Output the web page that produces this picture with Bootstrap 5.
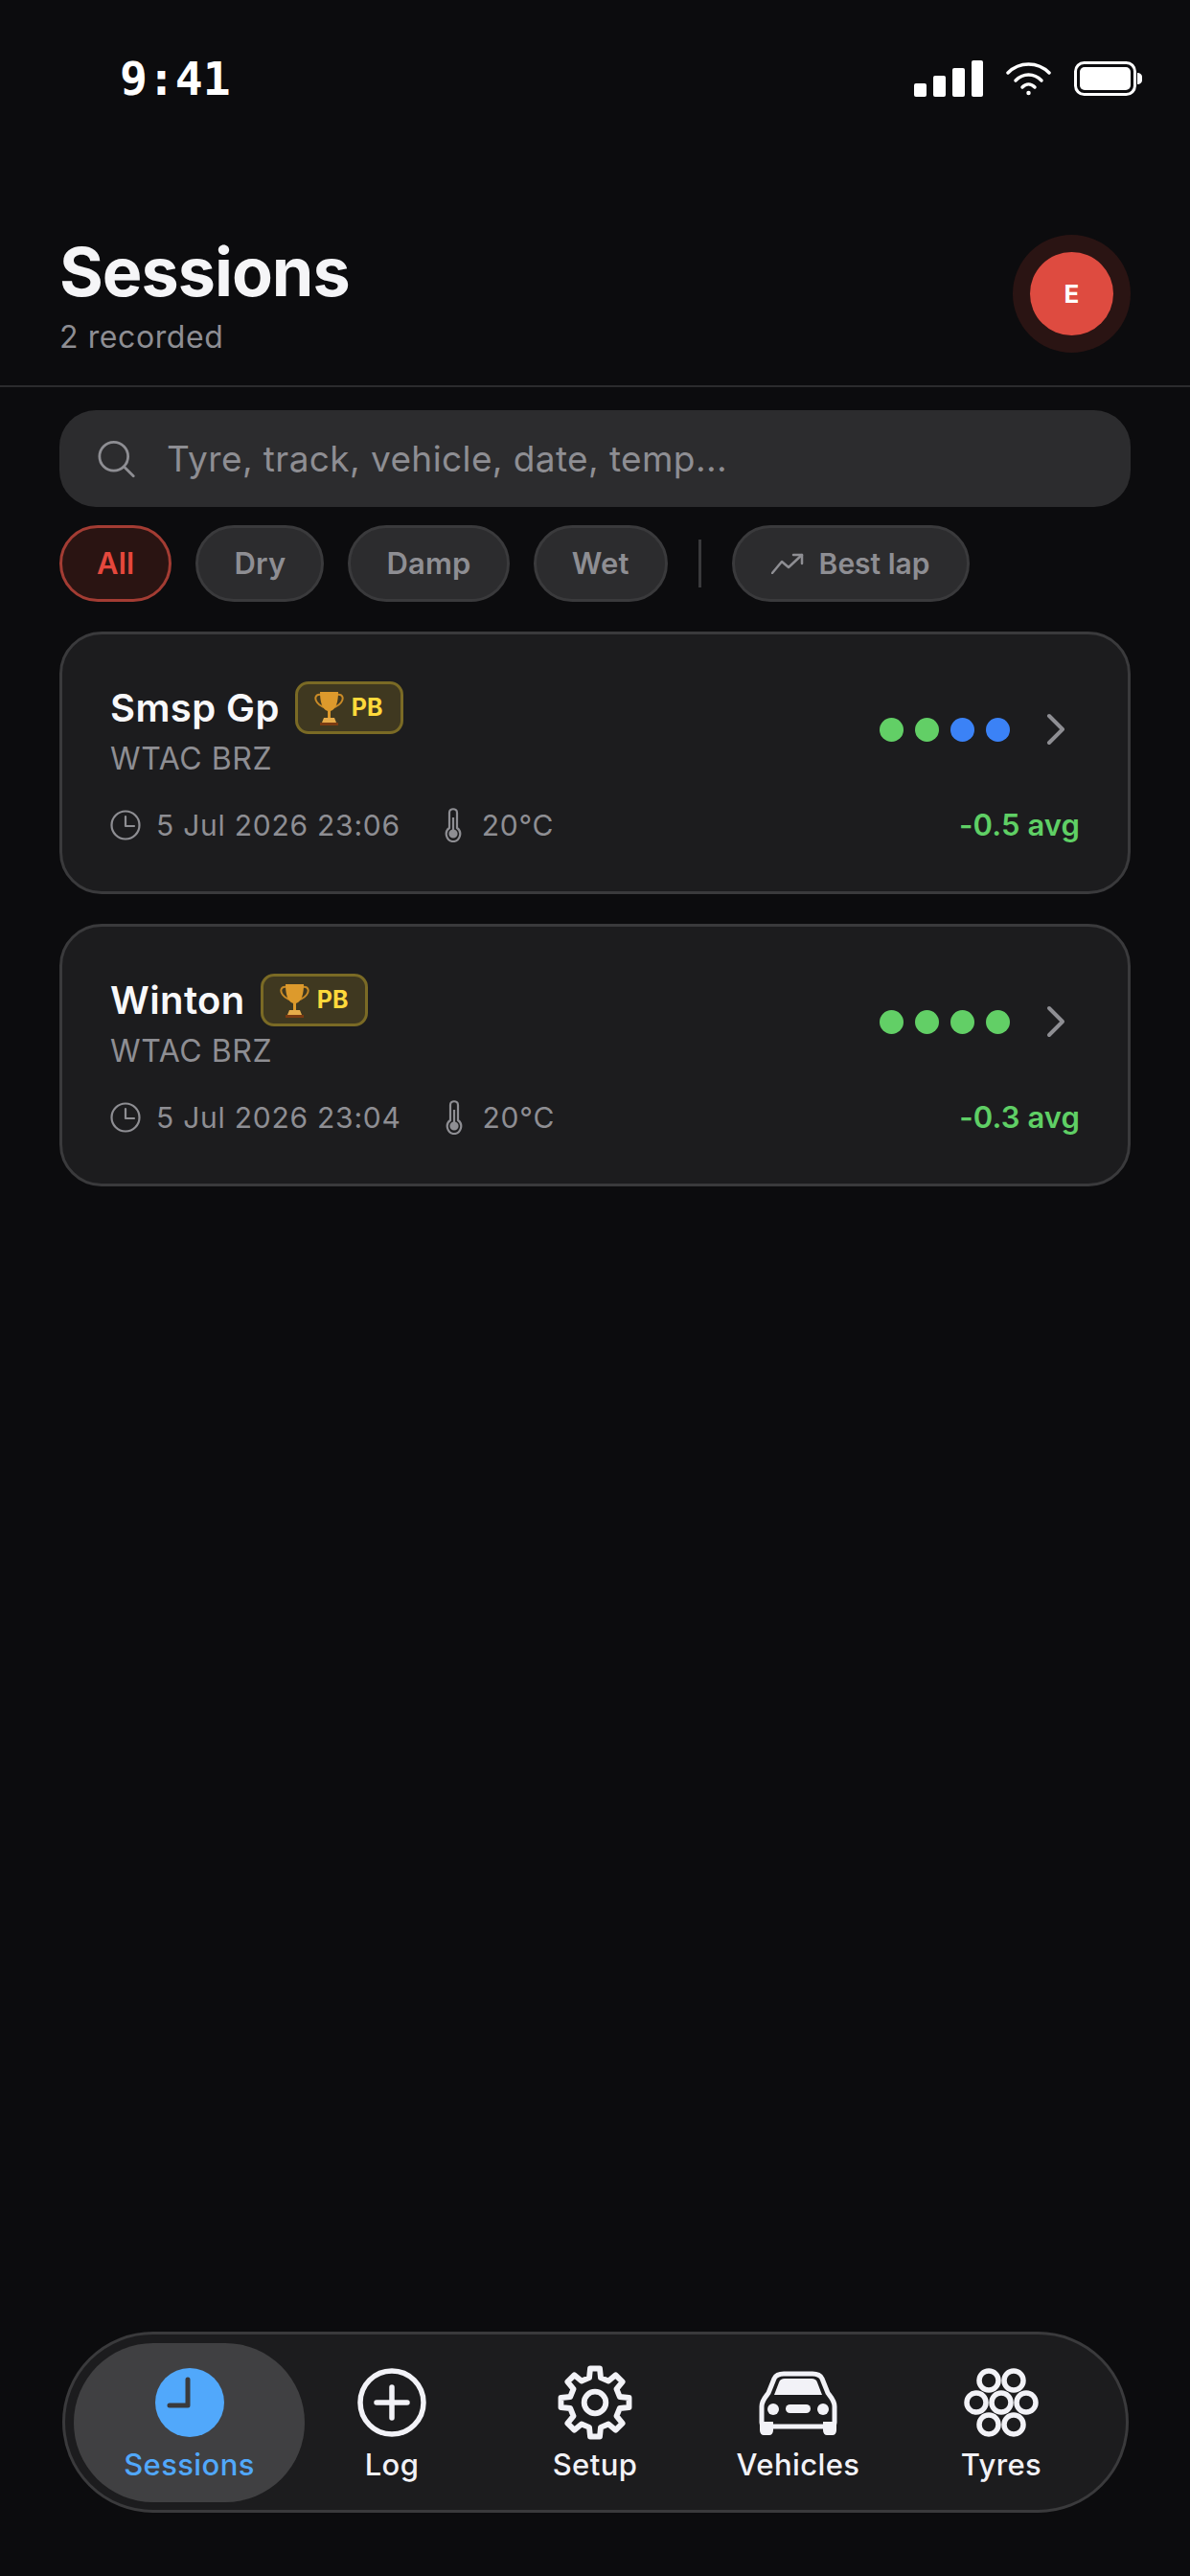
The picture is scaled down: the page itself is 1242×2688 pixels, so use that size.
<!DOCTYPE html>
<html lang="en">

<head>
    <meta charset="UTF-8">
    <meta name="viewport" content="width=device-width, initial-scale=1.0">
    <link href="https://cdn.jsdelivr.net/npm/bootstrap@5.3.0/dist/css/bootstrap.min.css" rel="stylesheet">
    <script src="https://cdn.jsdelivr.net/npm/bootstrap@5.3.0/dist/js/bootstrap.bundle.min.js"></script>
    <title>Sessions</title>
    <style>
        body {
            background: #0c0c0e;
            color: #f2f2f7;
            font-family: "Inter", "Liberation Sans", sans-serif;
        }

        /* status bar */
        .status-row {
            height: 44px;
            margin-top: 60px;
            padding: 0 50px 0 125px;
        }

        .status-time {
            font: 700 48px/44px "DejaVu Sans Mono", monospace;
            color: #fff;
        }

        /* header */
        .head-row {
            height: 300px;
            padding: 138px 62px 0 62px;
            border-bottom: 2px solid #2c2c2e;
        }

        .head-title {
            font-size: 70px;
            font-weight: 700;
            line-height: 84px;
            letter-spacing: -1px;
            margin: 0;
            color: #f5f5f7;
        }

        .head-sub {
            margin-top: 7px;
            font-size: 32px;
            line-height: 38px;
            letter-spacing: .6px;
            color: #8e8e93;
        }

        .avatar-dot {
            width: 87px;
            height: 87px;
            margin: 21px 18px 0 0;
            background: #de4b40;
            box-shadow: 0 0 0 18px #2a1413;
            font-size: 26px;
            font-weight: 700;
            color: #fff;
        }

        /* search + chips */
        .page-pad {
            padding: 24px 62px 0;
        }

        .search-wrap {
            height: 101px;
            padding: 0 40px;
            gap: 33px;
            background: #2c2c2e;
            border-radius: 38px;
        }

        .search-input,
        .search-input:focus {
            padding: 0;
            background: transparent;
            border: 0;
            box-shadow: none;
            font-size: 37px;
            letter-spacing: .4px;
            color: #f2f2f7;
        }

        .search-input::placeholder {
            color: #8e8e93;
            opacity: 1;
        }

        .chip-row {
            margin-top: 19px;
            margin-bottom: 31px;
            gap: 25px;
        }

        .chip-btn,
        .chip-btn:hover {
            height: 80px;
            padding: 0 37px;
            background: #2c2c2e;
            border: 3px solid #3a3a3c;
            color: #8e8e93;
            font-size: 31px;
            font-weight: 600;
            letter-spacing: .2px;
        }

        .chip-btn.chip-on {
            padding: 0 36px;
            background: #2a1412;
            border-color: #a33c33;
            color: #e5483d;
        }

        .chip-btn.chip-lap {
            padding: 0 38px;
            font-size: 30px;
            letter-spacing: 0;
        }

        .chip-rule {
            width: 3px;
            height: 50px;
            margin: 0 7px;
            background: #3a3a3c;
        }

        /* session cards */
        .session-card {
            height: 274px;
            margin-bottom: 31px;
            padding: 49px 50px 0;
            background: #1c1c1e;
            border: 3px solid #3a3a3c;
            border-radius: 44px;
            color: #f2f2f7;
        }

        .session-name {
            font-size: 40px;
            font-weight: 600;
            line-height: 55px;
            letter-spacing: .4px;
            color: #f8f8fa;
        }

        .pb-tag {
            height: 55px;
            padding: 0 18px 0 17px;
            gap: 8px;
            background: #3f3820;
            border: 3px solid #7a6a25;
            border-radius: 14px;
            font-size: 25px;
            font-weight: 700;
            color: #ffd93b;
        }

        .session-sub {
            font-size: 32px;
            line-height: 38px;
            letter-spacing: .6px;
            margin-top: 7px;
            color: #8e8e93;
        }

        .tyre-dot {
            width: 25px;
            height: 25px;
        }

        .dot-green {
            background: #62cf66;
        }

        .dot-blue {
            background: #3b82f6;
        }

        .dot-row {
            gap: 12px;
        }

        .chev-icon {
            margin: 0 15px 0 38px;
        }

        .meta-row {
            margin-top: 31px;
            font-size: 30px;
            line-height: 38px;
            letter-spacing: .75px;
            color: #8e8e93;
        }

        .thermo-icon {
            margin: 0 21px 0 46px;
        }

        .avg-text {
            font-size: 31px;
            font-weight: 600;
            letter-spacing: .1px;
            color: #5fcf65;
        }

        /* tab bar */
        .tab-shell {
            height: 189px;
            margin: 0 64px 66px 65px;
            padding: 9px 9px 8px;
            background: #1c1c1e;
            border: 3px solid #3a3a3c;
        }

        .tab-item {
            width: 212px;
            padding-top: 26px;
            font-size: 31px;
            font-weight: 500;
            line-height: 38px;
            letter-spacing: .4px;
            color: #f2f2f7;
        }

        .tab-item svg {
            margin-bottom: 10px;
        }

        .tab-item svg.gear-icon {
            margin: -3px 0 7px;
        }

        .tab-item.tab-on {
            width: 241px;
            margin-right: -15px;
            background: #404042;
            color: #51a8fb;
        }
    </style>
</head>

<body class="d-flex flex-column min-vh-100">
    <!-- status bar -->
    <div class="status-row d-flex justify-content-between align-items-center">
        <span class="status-time">9:41</span>
        <div class="d-flex align-items-center">
            <svg width="72" height="38" viewBox="0 0 72 38" fill="#fff">
                <rect x="0" y="24" width="13" height="14" rx="2"/>
                <rect x="20" y="16" width="13" height="22" rx="2"/>
                <rect x="40" y="8" width="13" height="30" rx="2"/>
                <rect x="60" y="0" width="12" height="38" rx="2"/>
            </svg>
            <svg class="ms-4" width="47" height="36" viewBox="0 0 47 36" fill="none" stroke="#fff" stroke-width="3.5" stroke-linecap="round">
                <path d="M2 12C14 0 33 0 45 12"/>
                <path d="M10 20C18 12 29 12 37 20"/>
                <path d="M17 27C21 23 26 23 30 27"/>
                <circle cx="23.5" cy="33" r="1.5" fill="#fff" stroke-width="1.5"/>
            </svg>
            <svg class="ms-4" width="71" height="36" viewBox="0 0 71 36" fill="none">
                <rect x="1.5" y="1.5" width="62" height="33" rx="9" stroke="#fff" stroke-width="3"/>
                <rect x="6" y="6" width="53" height="24" rx="5" fill="#fff"/>
                <path d="M66 12c3 0 5 2 5 4v4c0 2-2 4-5 4z" fill="#fff"/>
            </svg>
        </div>
    </div>

    <!-- header -->
    <div class="head-row d-flex justify-content-between align-items-start">
        <div>
            <h1 class="head-title">Sessions</h1>
            <div class="head-sub">2 recorded</div>
        </div>
        <div class="avatar-dot rounded-circle d-flex justify-content-center align-items-center">E</div>
    </div>

    <div class="page-pad">
        <div class="search-wrap d-flex align-items-center">
            <svg width="42" height="42" viewBox="0 0 42 42" fill="none" stroke="#8e8e93" stroke-width="3" stroke-linecap="round">
                <circle cx="18" cy="18" r="16"/>
                <path d="M29.5 29.5L40 40"/>
            </svg>
            <input class="form-control search-input" type="text" placeholder="Tyre, track, vehicle, date, temp...">
        </div>

        <div class="chip-row d-flex align-items-center">
            <button class="btn rounded-pill chip-btn chip-on" type="button">All</button>
            <button class="btn rounded-pill chip-btn" type="button">Dry</button>
            <button class="btn rounded-pill chip-btn" type="button">Damp</button>
            <button class="btn rounded-pill chip-btn" type="button">Wet</button>
            <div class="chip-rule"></div>
            <button class="btn rounded-pill chip-btn chip-lap d-flex align-items-center gap-3" type="button">
                <svg width="34" height="22" viewBox="0 0 34 22" fill="none" stroke="#8e8e93" stroke-width="2.5" stroke-linecap="round" stroke-linejoin="round">
                    <path d="M1 21L11 9L18 15L32 2"/>
                    <path d="M23 2H32V11"/>
                </svg>
                Best lap
            </button>
        </div>

        <div class="card session-card">
            <div class="d-flex justify-content-between align-items-center">
                <div>
                    <div class="d-flex align-items-center gap-3">
                        <span class="session-name">Smsp Gp</span>
                        <span class="pb-tag d-inline-flex align-items-center">
                            <svg width="31" height="38" viewBox="0 0 31 38">
                                <path d="M7 5C1 4 0 9 3 13C5 16 8 17 10 18M24 5C30 4 31 9 28 13C26 16 23 17 21 18" fill="none" stroke="#c98a26" stroke-width="2"/>
                                <path d="M6 2H25C25 12 23 20 17 22V29H14V22C8 20 6 12 6 2Z" fill="#dd9a2c"/>
                                <path d="M10 29H21L23 34H8Z" fill="#e6ac4a"/>
                                <rect x="6" y="34" width="19" height="3" fill="#7a3b12"/>
                            </svg>
                            PB
                        </span>
                    </div>
                    <div class="session-sub">WTAC BRZ</div>
                </div>
                <div class="d-flex align-items-center">
                    <div class="dot-row d-flex">
                        <span class="tyre-dot rounded-circle dot-green"></span>
                        <span class="tyre-dot rounded-circle dot-green"></span>
                        <span class="tyre-dot rounded-circle dot-blue"></span>
                        <span class="tyre-dot rounded-circle dot-blue"></span>
                    </div>
                    <svg class="chev-icon" width="20" height="34" viewBox="0 0 20 34" fill="none" stroke="#8e8e93" stroke-width="4" stroke-linecap="round" stroke-linejoin="round">
                        <path d="M3 3L17 17L3 31"/>
                    </svg>
                </div>
            </div>
            <div class="meta-row d-flex align-items-center">
                <svg width="32" height="32" viewBox="0 0 32 32" fill="none" stroke="#8e8e93" stroke-width="2.2" stroke-linecap="round" stroke-linejoin="round">
                    <circle cx="16" cy="16" r="14.5"/>
                    <path d="M16 7V17H25"/>
                </svg>
                <span class="ms-3">5 Jul 2026 23:06</span>
                <svg class="thermo-icon" width="18" height="36" viewBox="0 0 18 36" fill="none" stroke="#8e8e93" stroke-width="2.2">
                    <path d="M5 21V5C5 0 13 0 13 5V21C19 25 16 35 9 35C2 35 -1 25 5 21Z"/>
                    <circle cx="9" cy="27" r="3.5" fill="#8e8e93"/>
                    <path d="M9 10V24"/>
                </svg>
                <span>20°C</span>
                <span class="avg-text ms-auto">-0.5 avg</span>
            </div>
        </div>

        <div class="card session-card">
            <div class="d-flex justify-content-between align-items-center">
                <div>
                    <div class="d-flex align-items-center gap-3">
                        <span class="session-name">Winton</span>
                        <span class="pb-tag d-inline-flex align-items-center">
                            <svg width="31" height="38" viewBox="0 0 31 38">
                                <path d="M7 5C1 4 0 9 3 13C5 16 8 17 10 18M24 5C30 4 31 9 28 13C26 16 23 17 21 18" fill="none" stroke="#c98a26" stroke-width="2"/>
                                <path d="M6 2H25C25 12 23 20 17 22V29H14V22C8 20 6 12 6 2Z" fill="#dd9a2c"/>
                                <path d="M10 29H21L23 34H8Z" fill="#e6ac4a"/>
                                <rect x="6" y="34" width="19" height="3" fill="#7a3b12"/>
                            </svg>
                            PB
                        </span>
                    </div>
                    <div class="session-sub">WTAC BRZ</div>
                </div>
                <div class="d-flex align-items-center">
                    <div class="dot-row d-flex">
                        <span class="tyre-dot rounded-circle dot-green"></span>
                        <span class="tyre-dot rounded-circle dot-green"></span>
                        <span class="tyre-dot rounded-circle dot-green"></span>
                        <span class="tyre-dot rounded-circle dot-green"></span>
                    </div>
                    <svg class="chev-icon" width="20" height="34" viewBox="0 0 20 34" fill="none" stroke="#8e8e93" stroke-width="4" stroke-linecap="round" stroke-linejoin="round">
                        <path d="M3 3L17 17L3 31"/>
                    </svg>
                </div>
            </div>
            <div class="meta-row d-flex align-items-center">
                <svg width="32" height="32" viewBox="0 0 32 32" fill="none" stroke="#8e8e93" stroke-width="2.2" stroke-linecap="round" stroke-linejoin="round">
                    <circle cx="16" cy="16" r="14.5"/>
                    <path d="M16 7V17H25"/>
                </svg>
                <span class="ms-3">5 Jul 2026 23:04</span>
                <svg class="thermo-icon" width="18" height="36" viewBox="0 0 18 36" fill="none" stroke="#8e8e93" stroke-width="2.2">
                    <path d="M5 21V5C5 0 13 0 13 5V21C19 25 16 35 9 35C2 35 -1 25 5 21Z"/>
                    <circle cx="9" cy="27" r="3.5" fill="#8e8e93"/>
                    <path d="M9 10V24"/>
                </svg>
                <span>20°C</span>
                <span class="avg-text ms-auto">-0.3 avg</span>
            </div>
        </div>
    </div>

    <!-- tab bar -->
    <div class="tab-shell d-flex rounded-pill mt-auto">
        <div class="tab-item tab-on rounded-pill d-flex flex-column align-items-center">
            <svg width="72" height="72" viewBox="0 0 72 72">
                <circle cx="36" cy="36" r="36" fill="#51a8fb"/>
                <path d="M34 12V39H15" fill="none" stroke="#3a3a3c" stroke-width="5" stroke-linecap="round" stroke-linejoin="round"/>
            </svg>
            Sessions
        </div>
        <div class="tab-item d-flex flex-column align-items-center">
            <svg width="72" height="72" viewBox="0 0 72 72" fill="none" stroke="#f2f2f7" stroke-width="5.5" stroke-linecap="round">
                <circle cx="36" cy="36" r="33"/>
                <path d="M36 20V52M20 36H52"/>
            </svg>
            Log
        </div>
        <div class="tab-item d-flex flex-column align-items-center">
            <svg class="gear-icon" width="78" height="78" viewBox="-50 -50 100 100" fill="none" stroke="#f2f2f7" stroke-width="7.5" stroke-linejoin="round">
                <polygon points="-7.65,33.13 -6.4,45.55 6.4,45.55 7.65,33.13 18.02,28.84 27.68,36.73 36.73,27.68 28.84,18.02 33.13,7.65 45.55,6.4 45.55,-6.4 33.13,-7.65 28.84,-18.02 36.73,-27.68 27.68,-36.73 18.02,-28.84 7.65,-33.13 6.4,-45.55 -6.4,-45.55 -7.65,-33.13 -18.02,-28.84 -27.68,-36.73 -36.73,-27.68 -28.84,-18.02 -33.13,-7.65 -45.55,-6.4 -45.55,6.4 -33.13,7.65 -28.84,18.02 -36.73,27.68 -27.68,36.73 -18.02,28.84"/>
                <circle cx="0" cy="0" r="14.5"/>
            </svg>
            Setup
        </div>
        <div class="tab-item d-flex flex-column align-items-center">
            <svg width="84" height="72" viewBox="0 0 84 72" fill="#f2f2f7">
                <path d="M4 40C4 34 8 30 11 26L17 11C19 7 22 6 27 6H57C62 6 65 7 67 11L73 26C76 30 80 34 80 40V57C80 60 78 61 76 61H8C6 61 4 60 4 57Z" fill="none" stroke="#f2f2f7" stroke-width="5"/>
                <path d="M17 28L22 15C23 12 25 11 28 11H56C59 11 61 12 62 15L67 28Z"/>
                <circle cx="16" cy="43" r="6"/>
                <circle cx="68" cy="43" r="6"/>
                <rect x="29" y="38" width="26" height="9" rx="4.5"/>
                <path d="M2 56H16V65C16 68 14 70 12 70H6C4 70 2 68 2 65ZM68 56H82V65C82 68 80 70 78 70H72C70 70 68 68 68 65Z"/>
            </svg>
            Vehicles
        </div>
        <div class="tab-item d-flex flex-column align-items-center">
            <svg width="80" height="72" viewBox="0 0 80 72" fill="none" stroke="#f2f2f7" stroke-width="5.5">
                <circle cx="27" cy="13" r="10"/>
                <circle cx="53" cy="13" r="10"/>
                <circle cx="14" cy="36" r="10"/>
                <circle cx="40" cy="36" r="10"/>
                <circle cx="66" cy="36" r="10"/>
                <circle cx="27" cy="59" r="10"/>
                <circle cx="53" cy="59" r="10"/>
            </svg>
            Tyres
        </div>
    </div>
</body>

</html>
